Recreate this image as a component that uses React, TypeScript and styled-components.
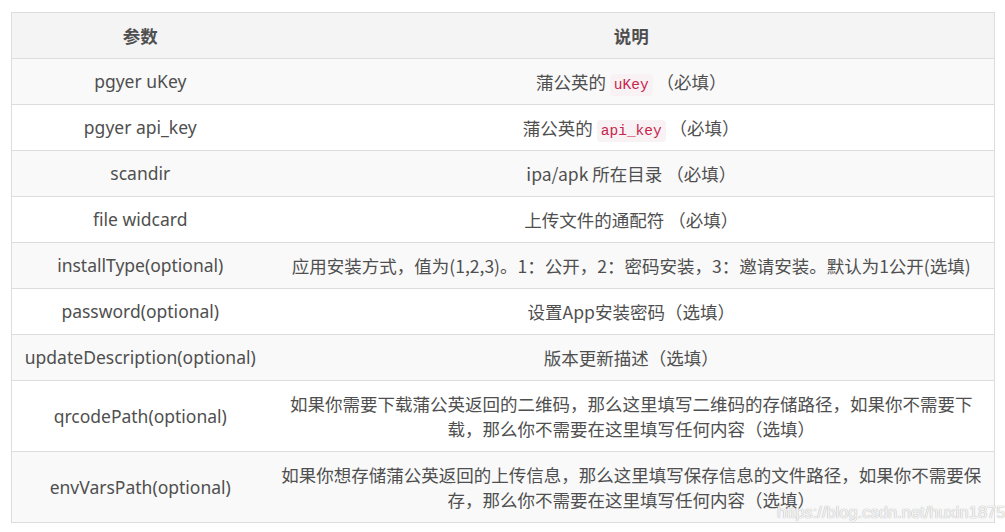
import React from "react";
import styled, { createGlobalStyle } from "styled-components";

type Row = {
  name: string;
  desc: React.ReactNode;
};

const GlobalStyle = createGlobalStyle`
  html, body {
    margin: 0;
    padding: 0;
    background: #ffffff;
  }
  body {
    font-family: "Noto Sans", "Noto Sans CJK SC", sans-serif;
    color: #4f4f4f;
    overflow: hidden;
  }
`;

const Page = styled.div`
  position: relative;
  width: 1005px;
  height: 532px;
  padding: 12px 0 0 11px;
  box-sizing: border-box;
`;

const Table = styled.table`
  width: 984px;
  border-collapse: collapse;
  table-layout: fixed;
  border: 1px solid #dddddd;
  font-size: 17.5px;
  line-height: 25px;
`;

const HeadRow = styled.tr`
  background: #f4f4f4;
`;

const BodyRow = styled.tr<{ $striped: boolean }>`
  background: ${(p) => (p.$striped ? "#f9f9f9" : "#ffffff")};
  border-top: 1px solid #dddddd;
`;

const Th = styled.th`
  font-family: "Noto Sans CJK SC", sans-serif;
  font-weight: 700;
  text-align: center;
  padding: 10px 7px;
  color: #4f4f4f;
`;

// latin-only names use Noto Sans, descriptions use the CJK face for the whole line
const Td = styled.td<{ $cjk?: boolean }>`
  font-family: ${(p) =>
    p.$cjk ? `"Noto Sans CJK SC", sans-serif` : `"Noto Sans", sans-serif`};
  text-align: center;
  vertical-align: middle;
  padding: 10px ${(p) => (p.$cjk ? "7px" : "4px")};
  color: #4f4f4f;
`;

const Code = styled.code`
  font-family: "Liberation Mono", "DejaVu Sans Mono", monospace;
  font-size: 14.5px;
  line-height: 1;
  color: #c7254e;
  background: #f9f2f4;
  border-radius: 4px;
  padding: 3px 4px;
`;

const Watermark = styled.div`
  position: absolute;
  left: 777px;
  top: 503px;
  font-family: "Liberation Sans", Arial, sans-serif;
  font-size: 16.5px;
  color: rgba(255, 255, 255, 0.85);
  text-shadow: 0 0 1px #b8b8b8, 0 0 1px #b8b8b8;
  white-space: nowrap;
`;

const rows: Row[] = [
  {
    name: "pgyer uKey",
    desc: (
      <>
        蒲公英的 <Code>uKey</Code> （必填）
      </>
    ),
  },
  {
    name: "pgyer api_key",
    desc: (
      <>
        蒲公英的 <Code>api_key</Code> （必填）
      </>
    ),
  },
  { name: "scandir", desc: "ipa/apk 所在目录 （必填）" },
  { name: "file widcard", desc: "上传文件的通配符 （必填）" },
  {
    name: "installType(optional)",
    desc: "应用安装方式，值为(1,2,3)。1：公开，2：密码安装，3：邀请安装。默认为1公开(选填)",
  },
  { name: "password(optional)", desc: "设置App安装密码（选填）" },
  { name: "updateDescription(optional)", desc: "版本更新描述（选填）" },
  {
    name: "qrcodePath(optional)",
    desc: "如果你需要下载蒲公英返回的二维码，那么这里填写二维码的存储路径，如果你不需要下载，那么你不需要在这里填写任何内容（选填）",
  },
  {
    name: "envVarsPath(optional)",
    desc: "如果你想存储蒲公英返回的上传信息，那么这里填写保存信息的文件路径，如果你不需要保存，那么你不需要在这里填写任何内容（选填）",
  },
];

export default function App() {
  return (
    <Page>
      <GlobalStyle />
      <Table>
        <colgroup>
          <col style={{ width: "257px" }} />
          <col />
        </colgroup>
        <thead>
          <HeadRow>
            <Th>参数</Th>
            <Th>说明</Th>
          </HeadRow>
        </thead>
        <tbody>
          {rows.map((row, i) => (
            <BodyRow key={row.name} $striped={i % 2 === 0}>
              <Td>{row.name}</Td>
              <Td $cjk>{row.desc}</Td>
            </BodyRow>
          ))}
        </tbody>
      </Table>
      <Watermark>https://blog.csdn.net/huxin1875</Watermark>
    </Page>
  );
}
